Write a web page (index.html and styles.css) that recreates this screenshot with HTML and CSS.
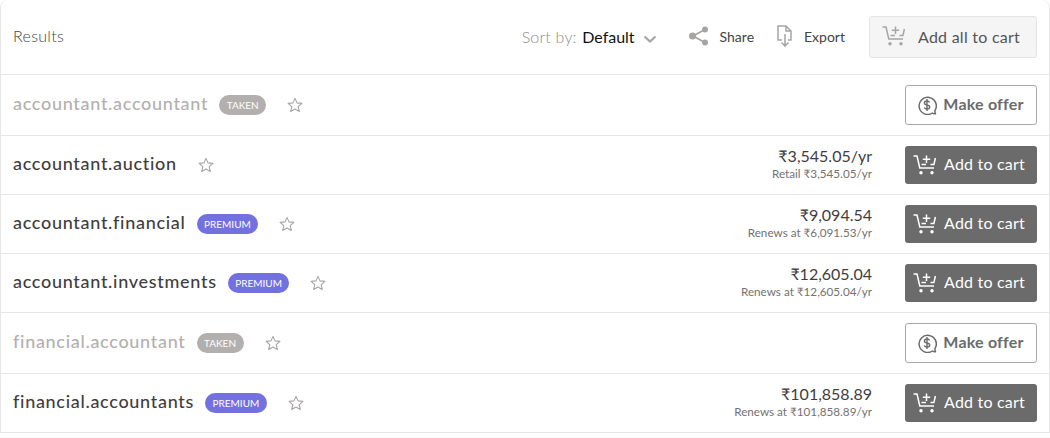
FILE: index.html
```html
<!DOCTYPE html>
<html lang="en">
<head>
    <meta charset="UTF-8">
    <title>Results</title>
    <link rel="stylesheet" href="styles.css">
</head>
<body>
    <svg class="defs" width="0" height="0">
        <symbol id="cart" viewBox="0 0 24 20">
            <path d="M0.500 1h3.500l2.800 12h14.200M17.500 9.500h3.400l1.500-6.500M8.500 9.500h4.500M13.500 0.500v7.500M9.800 4.200h7.400" fill="none" stroke="currentColor" stroke-width="1.500"/>
            <circle cx="8" cy="17.800" r="1.700" fill="currentColor"/>
            <circle cx="19" cy="17.800" r="1.700" fill="currentColor"/>
        </symbol>
        <symbol id="star" viewBox="0 0 16 16">
            <path d="M8 1.400l2 4.500 4.900.5-3.700 3.200 1.100 4.800L8 12l-4.300 2.400 1.100-4.800L1.100 6.400 6 5.900z" fill="none" stroke="currentColor" stroke-width="1.100" stroke-linejoin="round"/>
        </symbol>
        <symbol id="offer" viewBox="0 0 20 20">
            <path d="M18.500 18.800c-1.200.2-2.200-.1-3-.8A8.600 8.600 0 1 1 18 15.400c-.2 1.300 0 2.400.5 3.400z" fill="none" stroke="currentColor" stroke-width="1.500" stroke-linejoin="round"/>
            <path d="M12.600 7.400c-.4-1-1.400-1.400-2.600-1.400-1.500 0-2.600.8-2.600 2s1 1.700 2.600 2 2.700.8 2.700 2-1.200 2-2.700 2c-1.300 0-2.300-.5-2.700-1.500M10 4v12" fill="none" stroke="currentColor" stroke-width="1.400"/>
        </symbol>
    </svg>

    <div class="results">
        <div class="toolbar">
            <span class="title">Results</span>
            <div class="tools">
                <span class="sort">Sort by: <b>Default</b></span>
                <svg class="chevron" viewBox="0 0 14 8"><path d="M1.500 1.500L7 6.500l5.500-5" fill="none" stroke="currentColor" stroke-width="2.200"/></svg>
                <a class="tool tool-share">
                    <svg class="tool-icon" viewBox="0 0 20 20">
                        <path d="M16 3.500L4 10l12 6.500" fill="none" stroke="currentColor" stroke-width="1.800"/>
                        <circle cx="16" cy="3.500" r="3" fill="currentColor"/>
                        <circle cx="3.500" cy="10" r="3.500" fill="currentColor"/>
                        <circle cx="16" cy="16.500" r="3" fill="currentColor"/>
                    </svg>
                    Share
                </a>
                <a class="tool tool-export">
                    <svg class="tool-icon export-icon" viewBox="0 0 16 22">
                        <path d="M5 15H1V1h8l5 5v9h-3M9 1v5h5M8 9v12M4.500 17.500L8 21l3.500-3.500" fill="none" stroke="currentColor" stroke-width="1.500"/>
                    </svg>
                    Export
                </a>
                <button class="add-all"><svg class="cart-icon"><use href="#cart"/></svg>Add all to cart</button>
            </div>
        </div>

        <div class="row row-taken">
            <span class="domain">accountant.accountant</span>
            <span class="badge badge-taken">TAKEN</span>
            <svg class="star"><use href="#star"/></svg>
            <button class="btn-offer"><svg class="offer-icon"><use href="#offer"/></svg>Make offer</button>
        </div>

        <div class="row">
            <span class="domain">accountant.auction</span>
            <svg class="star"><use href="#star"/></svg>
            <div class="price"><strong>₹3,545.05/yr</strong><small>Retail ₹3,545.05/yr</small></div>
            <button class="btn-cart"><svg class="cart-icon"><use href="#cart"/></svg>Add to cart</button>
        </div>

        <div class="row">
            <span class="domain">accountant.financial</span>
            <span class="badge badge-premium">PREMIUM</span>
            <svg class="star"><use href="#star"/></svg>
            <div class="price"><strong>₹9,094.54</strong><small>Renews at ₹6,091.53/yr</small></div>
            <button class="btn-cart"><svg class="cart-icon"><use href="#cart"/></svg>Add to cart</button>
        </div>

        <div class="row">
            <span class="domain">accountant.investments</span>
            <span class="badge badge-premium">PREMIUM</span>
            <svg class="star"><use href="#star"/></svg>
            <div class="price"><strong>₹12,605.04</strong><small>Renews at ₹12,605.04/yr</small></div>
            <button class="btn-cart"><svg class="cart-icon"><use href="#cart"/></svg>Add to cart</button>
        </div>

        <div class="row row-taken">
            <span class="domain">financial.accountant</span>
            <span class="badge badge-taken">TAKEN</span>
            <svg class="star"><use href="#star"/></svg>
            <button class="btn-offer"><svg class="offer-icon"><use href="#offer"/></svg>Make offer</button>
        </div>

        <div class="row">
            <span class="domain">financial.accountants</span>
            <span class="badge badge-premium">PREMIUM</span>
            <svg class="star"><use href="#star"/></svg>
            <div class="price"><strong>₹101,858.89</strong><small>Renews at ₹101,858.89/yr</small></div>
            <button class="btn-cart"><svg class="cart-icon"><use href="#cart"/></svg>Add to cart</button>
        </div>
    </div>
</body>
</html>
```

FILE: styles.css
```css
body {
    margin: 0;
    background: #fff;
    font-family: Lato, "Open Sans", sans-serif;
    color: #3f3d3d;
    overflow: hidden;
}
.defs {
    position: absolute;
}
.results {
    width: 1048px;
    border: 1px solid #e6e6e6;
    border-top: none;
    border-bottom: none;
    border-radius: 8px 8px 0 0;
}
.toolbar {
    display: flex;
    align-items: center;
    justify-content: space-between;
    height: 74px;
    padding: 0 12px;
    border-bottom: 1px solid #e6e6e6;
}
.title {
    padding-bottom: 4px;
    font-size: 16px;
    font-weight: 300;
    letter-spacing: 0.3px;
    color: #444;
}
.tools {
    display: flex;
    align-items: center;
}
.sort {
    padding-bottom: 2px;
    font-size: 16px;
    font-weight: 300;
    letter-spacing: 0.2px;
    color: #8f8b8b;
}
.sort b {
    font-weight: 400;
    letter-spacing: 0;
    color: #111;
    margin-left: 1px;
}
.chevron {
    width: 14px;
    height: 8px;
    margin: 4px 0 0 8px;
    color: #a8a4a4;
}
.tool {
    display: flex;
    align-items: center;
    padding-bottom: 2px;
    font-size: 14px;
    color: #444;
}
.tool-share {
    margin-left: 32px;
}
.tool-export {
    margin-left: 23px;
}
.tool-icon {
    width: 20px;
    height: 20px;
    margin-right: 11px;
    color: #a8a4a4;
}
.export-icon {
    width: 16px;
    height: 22px;
    margin-right: 11px;
}
.add-all {
    display: flex;
    align-items: center;
    width: 168px;
    height: 42px;
    margin-left: 24px;
    padding: 0 0 2px 12px;
    border: 1px solid #e4e4e4;
    border-radius: 3px;
    background: #f5f5f5;
    font: 400 16px Lato, sans-serif;
    letter-spacing: 0.25px;
    color: #555;
}
.add-all .cart-icon {
    margin-right: 12px;
    color: #a8a4a4;
}
.cart-icon {
    width: 24px;
    height: 20px;
    margin-right: 7px;
    flex: none;
}
.row {
    display: flex;
    align-items: center;
    height: 58px;
    padding: 0 12px;
    border-bottom: 1px solid #e6e6e6;
}
.row-taken {
    height: 60px;
}
.domain {
    padding-bottom: 4px;
    font-size: 18px;
    font-weight: 500;
    letter-spacing: 0.7px;
    color: #3f3d3d;
}
.row-taken .domain {
    color: #b3afaf;
}
.badge {
    height: 20px;
    margin-left: 11px;
    padding: 0 7.5px;
    border-radius: 10px;
    font-size: 10px;
    line-height: 20px;
    color: #fff;
}
.badge-taken {
    background: #b3afaf;
}
.badge-premium {
    background: #7370e0;
}
.star {
    width: 16px;
    height: 16px;
    margin-left: 21px;
    color: #a8a4a4;
}
.price {
    display: flex;
    flex-direction: column;
    align-items: flex-end;
    margin-left: auto;
    margin-right: 33px;
    padding-bottom: 3px;
}
.price strong {
    font-size: 16px;
    font-weight: 400;
    line-height: 20px;
    color: #3f3d3d;
}
.price small {
    font-size: 11.7px;
    line-height: 15px;
    color: #757171;
}
.btn-cart, .btn-offer {
    display: flex;
    align-items: center;
    justify-content: center;
    width: 132px;
    height: 38px;
    padding: 0 0 3px;
    border-radius: 3px;
    font-family: Lato, sans-serif;
    font-size: 16px;
}
.btn-cart {
    padding-right: 4px;
    border: none;
    background: #6b6b6b;
    color: #fff;
    letter-spacing: 0.2px;
}
.btn-cart .cart-icon {
    margin-top: 3px;
}
.btn-offer {
    height: 40px;
    margin-left: auto;
    padding-right: 1px;
    border: 1px solid #a8a8a8;
    background: #fff;
    color: #6b6b6b;
    font-weight: 700;
    letter-spacing: 0.2px;
}
.offer-icon {
    width: 20px;
    height: 20px;
    margin: 3px 6px 0 0;
}
```
